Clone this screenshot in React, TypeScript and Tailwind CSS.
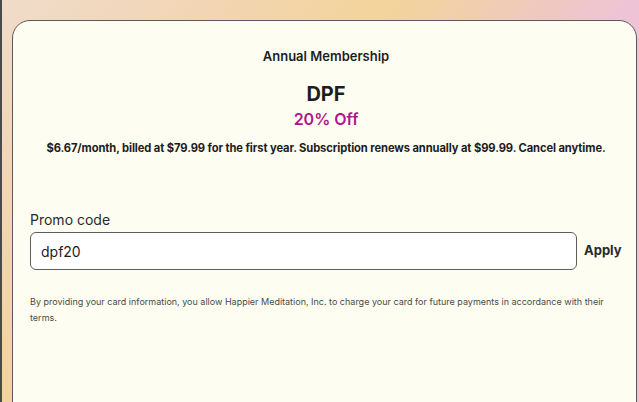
export default function App() {
  return (
    <div className="h-[402px] w-[639px] overflow-hidden border-l-2 border-[#4a4a4a] bg-[linear-gradient(135deg,#f0dcca_0%,#f2d5b4_20%,#f3d49a_38%,#f0cbb8_50%,#eec3d6_61%,#eec3d6_100%)] pl-[10px] pr-[2px] pt-[20px] font-['Inter',sans-serif]">
      <div className="h-[420px] rounded-t-[18px] border border-[#5a5a5a] bg-[#fdfef1] pl-[17px] pr-[14px] pt-[26px] text-[#1d1d1d]">
        <div className="flex flex-col items-center">
          <h3 className="text-[13px] font-semibold leading-[18px]">Annual Membership</h3>
          <h2 className="mt-[16px] text-[20px] font-bold leading-[26px]">DPF</h2>
          <p className="mt-[1px] text-[16px] font-semibold leading-[22px] text-[#b0158f]">20% Off</p>
          <p className="mt-[10px] text-[11.2px] font-bold leading-[16px] tracking-[-0.1px]">
            $6.67/month, billed at $79.99 for the first year. Subscription renews annually at $99.99. Cancel anytime.
          </p>
        </div>

        <div className="mt-[55px]">
          <label className="block text-[14px] leading-[18px] text-[#2a2a2a]">Promo code</label>
          <div className="mt-[3px] flex items-center gap-[7px]">
            <input
              defaultValue="dpf20"
              className="h-[38px] w-[547px] shrink-0 rounded-[6px] border border-[#5e5e5e] bg-white px-[10px] text-[14px] text-[#1d1d1d] outline-none"
            />
            <button className="text-[13px] font-bold text-[#2a2a2a]">Apply</button>
          </div>
        </div>

        <p className="mt-[24px] pr-[4px] text-[9px] leading-[16px] text-[#4a4a4a]">
          By providing your card information, you allow Happier Meditation, Inc. to charge your card for future payments in accordance with their terms.
        </p>
      </div>
    </div>
  );
}
